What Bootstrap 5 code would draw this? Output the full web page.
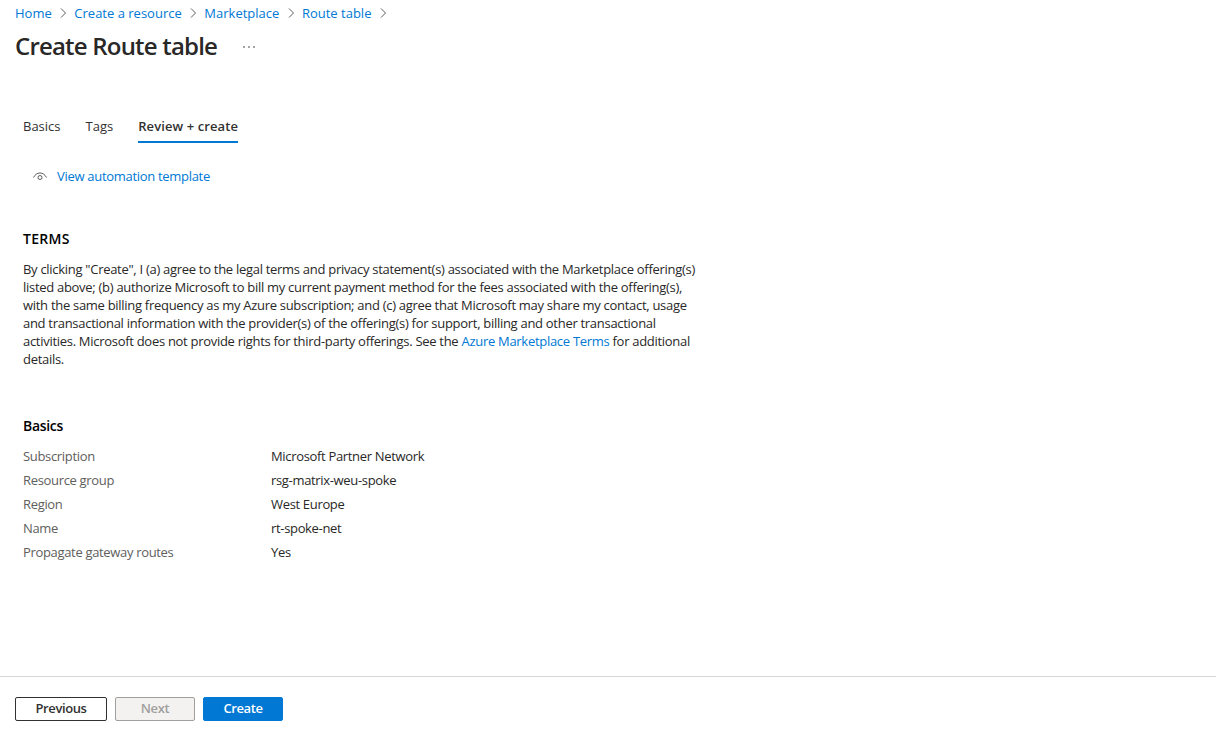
<!DOCTYPE html>
<html lang="en"><head><meta charset="utf-8"><title>Create Route table</title>
<link href="https://cdn.jsdelivr.net/npm/bootstrap@5.3.0/dist/css/bootstrap.min.css" rel="stylesheet">
<style>
html,body{height:730px;overflow:hidden}
body{font-family:"Open Sans","Noto Sans","Liberation Sans",sans-serif;font-size:13px;color:#292827;background:#fff;line-height:18px}
a{color:#0078d4;text-decoration:none}
.page{height:730px}
.crumbs{padding:4px 15px 0;height:22px;gap:3.3px;font-size:13px}
.chev{width:16px;height:16px;display:block}
.ttl{font-family:"Open Sans",sans-serif;font-size:24px;font-weight:600;line-height:32px;margin:0;color:#292827;letter-spacing:-.8px}
.ttlrow{margin-top:8px;padding:0 15px;height:32px;gap:25px}
.dots{margin-top:1px}
.tabset{margin:45px 0 0 23px;gap:25px;height:36px}
.tabitem{color:#323130;padding:10px 0 0;height:36px;display:block}
.tabon{font-weight:600;letter-spacing:.1px;border-bottom:2px solid #0078d4}
.tmpl{margin:23px 0 0 32px;height:20px;gap:9px;letter-spacing:-.3px}
.sect{font-weight:600;color:#000;font-size:14px;margin:0;letter-spacing:-.3px}
.terms{margin:45px 0 0 23px;width:680px}
.terms .sect{letter-spacing:.3px}
.termtext{margin:12px 0 0;letter-spacing:-.29px}
.basics{margin:50px 0 0 23px}
.basics .sect{margin-bottom:9px}
.kv{height:24px;line-height:24px;letter-spacing:-.33px}
.kvk{width:248px;color:#605e5c}
.foot{border-top:1px solid #d6d6d6;height:54px;margin-top:auto;padding:20px 15px 0;gap:8px}
.fbtn{height:24px;font-size:13px;font-weight:600;line-height:18px;padding:0 0 2px;border-radius:2px;letter-spacing:-.4px}
.fprev{width:92px;border:1px solid #323130;color:#323130;background:#fff}
.fnext{width:80px;border:1px solid #a19f9d;background:#f3f2f1;color:#a19f9d}
.btn.fnext:disabled{border-color:#a19f9d;background:#f3f2f1;color:#a19f9d;opacity:1}
.fcreate{width:80px;border:1px solid #0078d4;background:#0078d4;color:#fff}
</style></head><body>
<div class="page d-flex flex-column">
<nav class="crumbs d-flex align-items-center">
<a href="#">Home</a><svg class="chev" viewBox="0 0 16 16"><path d="M6 3.5 10.5 8 6 12.5" fill="none" stroke="#605e5c"/></svg>
<a href="#">Create a resource</a><svg class="chev" viewBox="0 0 16 16"><path d="M6 3.5 10.5 8 6 12.5" fill="none" stroke="#605e5c"/></svg>
<a href="#">Marketplace</a><svg class="chev" viewBox="0 0 16 16"><path d="M6 3.5 10.5 8 6 12.5" fill="none" stroke="#605e5c"/></svg>
<a href="#">Route table</a><svg class="chev" viewBox="0 0 16 16"><path d="M6 3.5 10.5 8 6 12.5" fill="none" stroke="#605e5c"/></svg>
</nav>
<div class="ttlrow d-flex align-items-center"><h1 class="ttl">Create Route table</h1>
<svg class="dots" width="14" height="4" viewBox="0 0 14 4" fill="#323130" aria-label="More"><circle cx="2" cy="2" r=".8"/><circle cx="7" cy="2" r=".8"/><circle cx="12" cy="2" r=".8"/></svg></div>
<div class="tabset d-flex"><span class="tabitem">Basics</span><span class="tabitem">Tags</span><span class="tabitem tabon">Review + create</span></div>
<div class="tmpl d-flex align-items-center">
<svg width="16" height="16" viewBox="0 0 16 16" fill="none" stroke="#605e5c"><path d="M1.5 9.5C3 6.5 5.3 5 8 5s5 1.5 6.5 4.5"/><circle cx="8" cy="9.5" r="2"/></svg>
<a href="#">View automation template</a></div>
<div class="terms"><h2 class="sect">TERMS</h2>
<p class="termtext">By clicking "Create", I (a) agree to the legal terms and privacy statement(s) associated with the Marketplace offering(s) listed above; (b) authorize Microsoft to bill my current payment method for the fees associated with the offering(s), with the same billing frequency as my Azure subscription; and (c) agree that Microsoft may share my contact, usage and transactional information with the provider(s) of the offering(s) for support, billing and other transactional activities. Microsoft does not provide rights for third-party offerings. See the <a href="#">Azure Marketplace Terms</a> for additional details.</p></div>
<div class="basics"><h2 class="sect">Basics</h2>
<div class="kv d-flex"><div class="kvk">Subscription</div><div>Microsoft Partner Network</div></div>
<div class="kv d-flex"><div class="kvk">Resource group</div><div>rsg-matrix-weu-spoke</div></div>
<div class="kv d-flex"><div class="kvk">Region</div><div>West Europe</div></div>
<div class="kv d-flex"><div class="kvk">Name</div><div>rt-spoke-net</div></div>
<div class="kv d-flex"><div class="kvk">Propagate gateway routes</div><div>Yes</div></div>
</div>
<div class="foot d-flex"><button class="btn fbtn fprev">Previous</button><button class="btn fbtn fnext" disabled>Next</button><button class="btn fbtn fcreate">Create</button></div>
</div>
<script src="https://cdn.jsdelivr.net/npm/bootstrap@5.3.0/dist/js/bootstrap.bundle.min.js"></script>
</body></html>
